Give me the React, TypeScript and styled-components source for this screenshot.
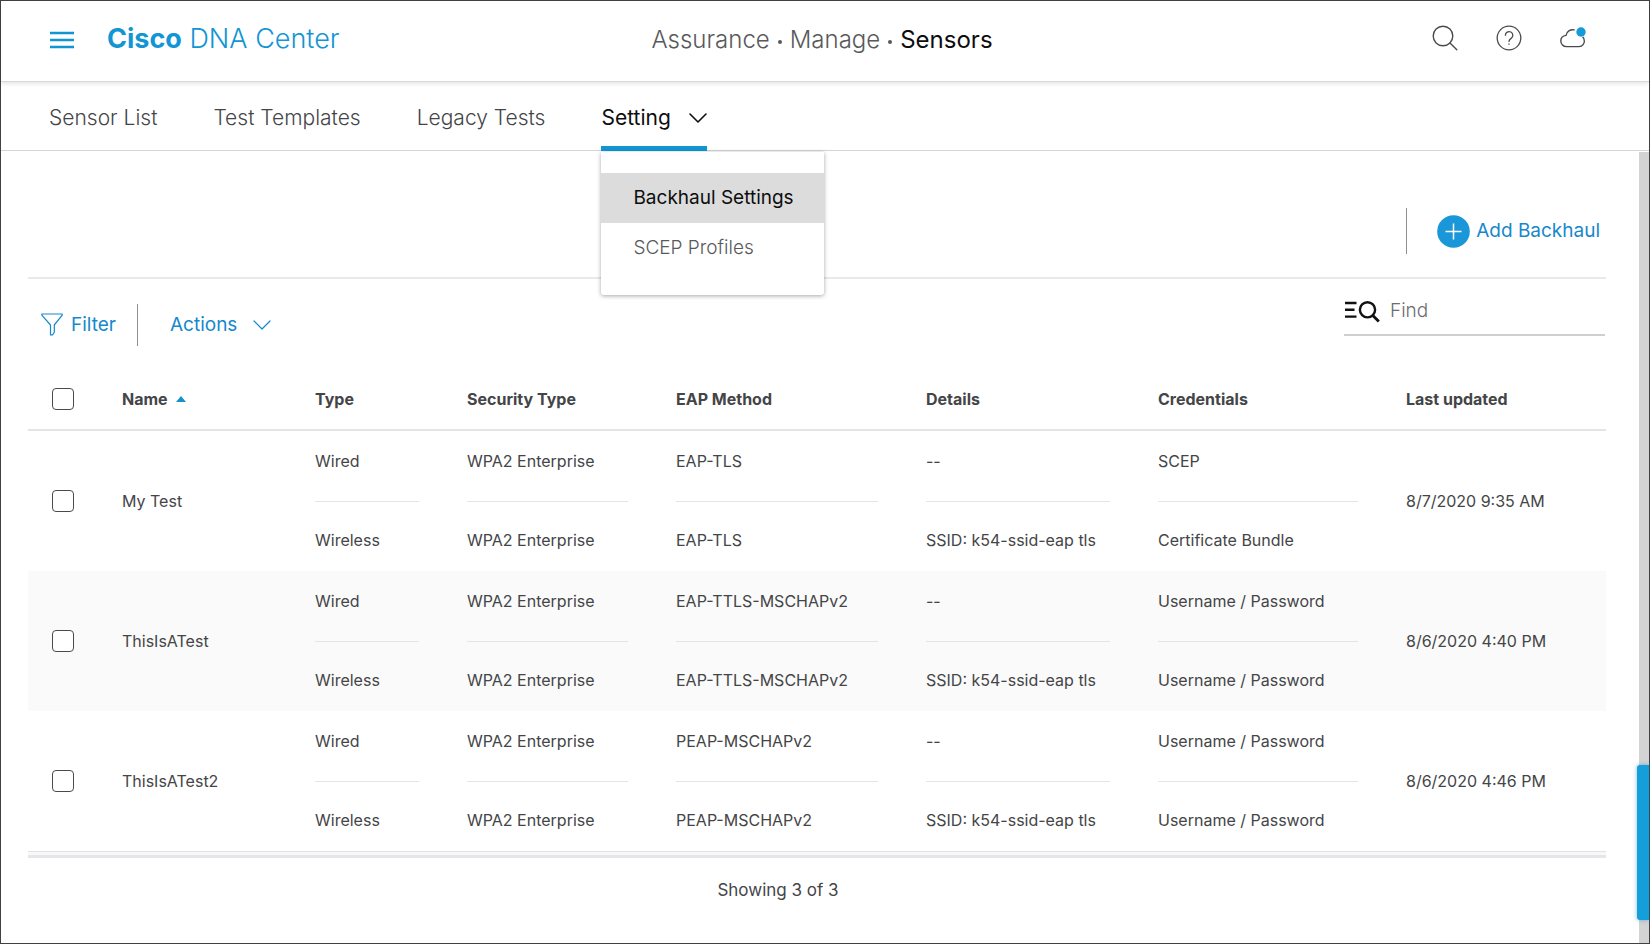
import React, { useState } from "react";
import styled, { createGlobalStyle, css } from "styled-components";

const color = {
  brand: "#1295d3",
  link: "#1688cc",
  text: "#444547",
  strong: "#0d0d0e",
  muted: "#58595b",
  rule: "#e4e4e5",
};

const GlobalStyle = createGlobalStyle`
  *, *::before, *::after { box-sizing: border-box; }
  body {
    margin: 0;
    background: #fff;
    color: ${color.text};
    font-family: Inter, "Liberation Sans", sans-serif;
    font-size: 16px;
    line-height: 24px;
  }
  button, input { font: inherit; color: inherit; }
  button { padding: 0; border: 0; background: none; cursor: pointer; }
  a { color: inherit; text-decoration: none; }
`;

const Page = styled.div`
  position: relative;
  display: flex;
  flex-direction: column;
  min-height: 100vh;
  border: 1px solid #414042;
`;

const Header = styled.header`
  display: grid;
  grid-template-columns: 1fr auto 1fr;
  align-items: center;
  height: 81px;
  padding: 0 54px 2px 48px;
  border-bottom: 1px solid #d9d9da;
  box-shadow: 0 2px 4px rgba(0, 0, 0, 0.1);
`;

const BrandGroup = styled.div`
  display: flex;
  align-items: center;
  gap: 32px;
`;

const MenuButton = styled.button`
  display: flex;
`;

const Brand = styled.a`
  padding-bottom: 2px;
  color: ${color.brand};
  font-size: 27px;
  font-weight: 300;
  line-height: 32px;
`;

const BrandName = styled.strong`
  font-weight: 700;
`;

const Breadcrumb = styled.nav`
  display: flex;
  align-items: center;
  gap: 8px;
  color: ${color.muted};
  font-size: 24px;
  font-weight: 300;
  line-height: 32px;
`;

const Dot = styled.span`
  width: 4px;
  height: 4px;
  margin-top: 4px;
  border-radius: 2px;
  background: ${color.muted};
`;

const Current = styled.span`
  color: ${color.strong};
  font-weight: 400;
`;

const HeaderActions = styled.div`
  display: flex;
  justify-content: flex-end;
  gap: 20px;
  padding-bottom: 5px;
`;

const IconButton = styled.button`
  display: flex;
  align-items: center;
  justify-content: center;
  width: 44px;
  height: 44px;
`;

const Tabs = styled.nav`
  display: flex;
  gap: 56px;
  height: 69px;
  padding-left: 48px;
  border-bottom: 1px solid #d2d4d5;
  font-size: 21px;
`;

const tabStyle = css<{ $active?: boolean }>`
  display: flex;
  align-items: center;
  gap: 18px;
  height: 69px;
  padding-top: 7px;
  border-bottom: 5px solid ${(p) => (p.$active ? color.brand : "transparent")};
  color: ${(p) => (p.$active ? color.strong : color.text)};
  font-weight: ${(p) => (p.$active ? 400 : 300)};
`;

const Tab = styled.a<{ $active?: boolean }>`
  ${tabStyle}
`;

const TabButton = styled.button<{ $active?: boolean }>`
  ${tabStyle}
`;

const TabWithMenu = styled.div`
  position: relative;
`;

const Menu = styled.div`
  position: absolute;
  z-index: 2;
  top: 70px;
  left: 0;
  width: 223px;
  padding: 21px 0 22px;
  border-radius: 0 0 3px 3px;
  background: #fff;
  box-shadow: 0 1px 4px rgba(0, 0, 0, 0.35);
`;

const MenuItem = styled.a<{ $selected?: boolean }>`
  display: block;
  padding: 0 32px;
  background: ${(p) => (p.$selected ? "#dcdcdc" : "transparent")};
  color: ${(p) => (p.$selected ? color.strong : color.muted)};
  font-size: 19px;
  font-weight: ${(p) => (p.$selected ? 400 : 300)};
  line-height: 50px;
  white-space: nowrap;
`;

const Body = styled.div`
  display: flex;
  flex: 1;
`;

const Content = styled.main`
  flex: 1;
  min-width: 0;
  padding: 0 33px 32px 27px;
`;

const ScrollTrack = styled.div`
  width: 10px;
  margin-top: 1px;
  background: #d3d3d4;
`;

const FeedbackTab = styled.button`
  position: absolute;
  right: 0;
  bottom: 23px;
  width: 12px;
  height: 155px;
  border-radius: 3px 0 0 3px;
  background: #149fdb;
  box-shadow: 0 0 4px rgba(20, 120, 190, 0.5);
`;

const PageActions = styled.div`
  display: flex;
  align-items: center;
  justify-content: flex-end;
  height: 128px;
  padding: 34px 6px 0 0;
  border-bottom: 2px solid #e9e9ea;
`;

const Separator = styled.span<{ $height: number }>`
  width: 1px;
  height: ${(p) => p.$height}px;
  background: #8e8f91;
`;

const AddButton = styled.button`
  display: flex;
  align-items: center;
  gap: 6px;
  margin-left: 30px;
  color: ${color.link};
  font-size: 19px;
`;

const Toolbar = styled.div`
  display: flex;
  align-items: flex-start;
  justify-content: space-between;
  height: 89px;
  padding: 14px 1px 0 13px;
`;

const ToolGroup = styled.div`
  display: flex;
  align-items: center;
  padding-top: 11px;
`;

const ToolButton = styled.button<{ $gap: number }>`
  display: flex;
  align-items: center;
  gap: ${(p) => p.$gap}px;
  color: ${color.link};
  font-size: 19px;
`;

const FilterButton = styled(ToolButton)`
  align-items: flex-start;
  margin-right: 21px;
`;

const ActionsButton = styled(ToolButton)`
  margin-left: 32px;
`;

const Search = styled.label`
  display: flex;
  align-items: center;
  gap: 10px;
  width: 261px;
  height: 43px;
  padding-bottom: 5px;
  border-bottom: 2px solid #cfcfd0;
`;

const SearchInput = styled.input`
  flex: 1;
  min-width: 0;
  padding: 0;
  border: 0;
  outline: 0;
  background: none;
  font-size: 19px;
  font-weight: 300;
  &::placeholder { color: #6b6c6e; opacity: 1; }
`;

const Table = styled.table`
  width: 100%;
  table-layout: fixed;
  border-collapse: separate;
  border-spacing: 0;
`;

const HeadCell = styled.th`
  height: 63px;
  padding: 0 24px;
  border-bottom: 2px solid ${color.rule};
  text-align: left;
  font-weight: 700;
  white-space: nowrap;
`;

const SortButton = styled.button`
  display: inline-flex;
  align-items: center;
  gap: 8px;
  font-weight: 700;
`;

const Row = styled.tr`
  &:nth-child(even) { background: #fafafa; }
`;

const Cell = styled.td`
  padding: 0 24px;
  white-space: nowrap;
`;

const Pair = styled.div`
  display: flex;
  flex-direction: column;
`;

const PairItem = styled.div`
  padding: 26px 0 19px;
  &:first-child {
    padding: 18px 0 28px;
    border-bottom: 1px solid ${color.rule};
  }
`;

const CheckBox = styled.input`
  display: block;
  appearance: none;
  width: 22px;
  height: 22px;
  margin: 0;
  border: 1px solid #4a4b4d;
  border-radius: 4px;
  background: #fff;
  &:checked { background: ${color.brand}; }
`;

const TableEnd = styled.div`
  height: 7px;
  border-top: 1px solid #e2e2e3;
  border-bottom: 3px solid #e6e5e7;
  background: #f8f7f9;
`;

const Summary = styled.p`
  margin: 20px 0 0;
  padding-right: 78px;
  text-align: center;
  font-size: 17px;
`;

const columns = [
  { title: "Type", width: 152 },
  { title: "Security Type", width: 209 },
  { title: "EAP Method", width: 250 },
  { title: "Details", width: 232 },
  { title: "Credentials", width: 248 },
];

const records = [
  {
    name: "My Test",
    updated: "8/7/2020 9:35 AM",
    wired: ["Wired", "WPA2 Enterprise", "EAP-TLS", "--", "SCEP"],
    wireless: ["Wireless", "WPA2 Enterprise", "EAP-TLS", "SSID: k54-ssid-eap tls", "Certificate Bundle"],
  },
  {
    name: "ThisIsATest",
    updated: "8/6/2020 4:40 PM",
    wired: ["Wired", "WPA2 Enterprise", "EAP-TTLS-MSCHAPv2", "--", "Username / Password"],
    wireless: ["Wireless", "WPA2 Enterprise", "EAP-TTLS-MSCHAPv2", "SSID: k54-ssid-eap tls", "Username / Password"],
  },
  {
    name: "ThisIsATest2",
    updated: "8/6/2020 4:46 PM",
    wired: ["Wired", "WPA2 Enterprise", "PEAP-MSCHAPv2", "--", "Username / Password"],
    wireless: ["Wireless", "WPA2 Enterprise", "PEAP-MSCHAPv2", "SSID: k54-ssid-eap tls", "Username / Password"],
  },
];

const MenuIcon = () => (
  <svg width="26" height="18" viewBox="0 0 26 18" stroke={color.brand} strokeWidth="2.4" aria-hidden="true">
    <path d="M1 2h24M1 9h24M1 16h24" />
  </svg>
);

const SearchIcon = () => (
  <svg width="26" height="26" viewBox="0 0 26 26" fill="none" stroke="#4a4b4d" strokeWidth="1.4" strokeLinecap="round" aria-hidden="true">
    <circle cx="11" cy="11" r="9.8" />
    <path d="M18 18l6.8 6.8" />
  </svg>
);

const HelpIcon = () => (
  <svg width="26" height="26" viewBox="0 0 26 26" fill="none" stroke="#4a4b4d" strokeWidth="1.3" strokeLinecap="round" aria-hidden="true">
    <circle cx="13" cy="13" r="11.8" />
    <path d="M9.4 10.3a3.7 3.7 0 1 1 5.7 3.1c-1.4.9-2.1 1.5-2.1 3" />
    <path d="M13 19v.2" />
  </svg>
);

const CloudIcon = () => (
  <svg width="28" height="24" viewBox="0 0 28 24" fill="none" stroke="#4a4b4d" strokeWidth="1.4" strokeLinecap="round" aria-hidden="true">
    <path d="M15.2 3.9A6.7 6.7 0 0 0 7 9.4C4 9.8 1.8 12 1.8 15a5.6 5.6 0 0 0 5.6 5.6h12.4a5.5 5.5 0 0 0 5.3-7.2c-.2-.9-.6-1.6-1.1-2.2" />
    <circle cx="22" cy="6" r="4.7" fill="#149bd9" stroke="none" />
  </svg>
);

const ChevronIcon = ({ width, stroke }: { width: number; stroke: number }) => (
  <svg width={width} height="10" viewBox={`0 0 ${width} 10`} fill="none" stroke="currentColor" strokeWidth={stroke} strokeLinecap="round" strokeLinejoin="round" aria-hidden="true">
    <path d={`M1 1l${width / 2 - 1} 8 ${width / 2 - 1}-8`} />
  </svg>
);

const PlusIcon = () => (
  <svg width="33" height="33" viewBox="0 0 33 33" aria-hidden="true">
    <circle cx="16.5" cy="16.5" r="16.3" fill="#1a97d8" />
    <path d="M16.5 8.500v16M8.500 16.500h16" stroke="#fff" strokeWidth="1.5" />
  </svg>
);

const FilterIcon = () => (
  <svg width="22" height="23" viewBox="0 0 22 23" fill="none" stroke={color.link} strokeWidth="1.2" strokeLinejoin="round" aria-hidden="true">
    <path d="M.8 1h20.400v1.200L13.300 12v7.200l-1.600 2.600H9.500V12L.8 2.200z" />
  </svg>
);

const FindIcon = () => (
  <svg width="36" height="23" viewBox="0 0 36 23" fill="none" stroke="#111" strokeWidth="2.4" aria-hidden="true">
    <path d="M1 3h11.500M1 9.800h9.500M1 16.600h11.500" />
    <circle cx="23.5" cy="9.8" r="7.6" />
    <path d="M28.800 15.500l6 6" strokeWidth="2.8" />
  </svg>
);

const SortIcon = () => (
  <svg width="10" height="6" viewBox="0 0 10 6" fill="#1a8fd0" aria-hidden="true">
    <path d="M5 0l5 6H0z" />
  </svg>
);

export default function App() {
  const [menuOpen, setMenuOpen] = useState(true);

  return (
    <>
      <GlobalStyle />
      <Page>
        <Header>
          <BrandGroup>
            <MenuButton aria-label="Main menu"><MenuIcon /></MenuButton>
            <Brand href="#home"><BrandName>Cisco</BrandName> DNA Center</Brand>
          </BrandGroup>
          <Breadcrumb aria-label="Breadcrumb">
            <a href="#assurance">Assurance</a>
            <Dot />
            <a href="#manage">Manage</a>
            <Dot />
            <Current aria-current="page">Sensors</Current>
          </Breadcrumb>
          <HeaderActions>
            <IconButton aria-label="Search"><SearchIcon /></IconButton>
            <IconButton aria-label="Help"><HelpIcon /></IconButton>
            <IconButton aria-label="Cloud updates"><CloudIcon /></IconButton>
          </HeaderActions>
        </Header>

        <Tabs aria-label="Sections">
          <Tab href="#sensors">Sensor List</Tab>
          <Tab href="#templates">Test Templates</Tab>
          <Tab href="#legacy">Legacy Tests</Tab>
          <TabWithMenu>
            <TabButton $active aria-expanded={menuOpen} onClick={() => setMenuOpen(!menuOpen)}>
              Setting
              <ChevronIcon width={18} stroke={1.6} />
            </TabButton>
            {menuOpen && (
              <Menu>
                <MenuItem href="#backhaul" $selected>Backhaul Settings</MenuItem>
                <MenuItem href="#scep">SCEP Profiles</MenuItem>
              </Menu>
            )}
          </TabWithMenu>
        </Tabs>

        <Body>
          <Content>
            <PageActions>
              <Separator $height={46} />
              <AddButton><PlusIcon />Add Backhaul</AddButton>
            </PageActions>

            <Toolbar>
              <ToolGroup>
                <FilterButton $gap={8}><FilterIcon />Filter</FilterButton>
                <Separator $height={42} />
                <ActionsButton $gap={16}>Actions<ChevronIcon width={18} stroke={1.2} /></ActionsButton>
              </ToolGroup>
              <Search>
                <FindIcon />
                <SearchInput type="text" placeholder="Find" aria-label="Find" />
              </Search>
            </Toolbar>

            <Table>
              <colgroup>
                <col width={70} />
                <col width={193} />
                {columns.map((c) => <col key={c.title} width={c.width} />)}
                <col width={224} />
              </colgroup>
              <thead>
                <tr>
                  <HeadCell><CheckBox type="checkbox" aria-label="Select all" /></HeadCell>
                  <HeadCell aria-sort="ascending"><SortButton>Name<SortIcon /></SortButton></HeadCell>
                  {columns.map((c) => <HeadCell key={c.title}>{c.title}</HeadCell>)}
                  <HeadCell>Last updated</HeadCell>
                </tr>
              </thead>
              <tbody>
                {records.map((r) => (
                  <Row key={r.name}>
                    <Cell><CheckBox type="checkbox" aria-label={`Select ${r.name}`} /></Cell>
                    <Cell>{r.name}</Cell>
                    {columns.map((c, i) => (
                      <Cell key={c.title}>
                        <Pair>
                          <PairItem>{r.wired[i]}</PairItem>
                          <PairItem>{r.wireless[i]}</PairItem>
                        </Pair>
                      </Cell>
                    ))}
                    <Cell>{r.updated}</Cell>
                  </Row>
                ))}
              </tbody>
            </Table>
            <TableEnd />
            <Summary>Showing 3 of 3</Summary>
          </Content>
          <ScrollTrack />
        </Body>
        <FeedbackTab aria-label="Feedback" />
      </Page>
    </>
  );
}
